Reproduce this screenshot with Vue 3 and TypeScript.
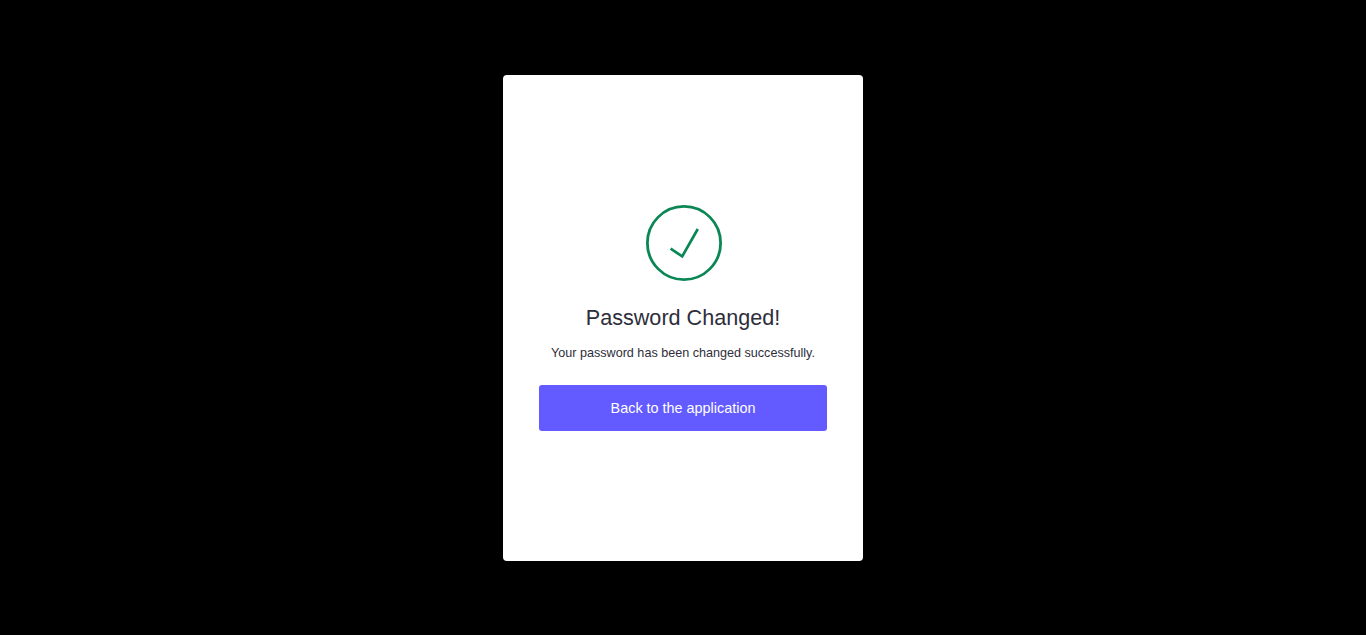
<script setup lang="ts">
const title = 'Password Changed!'
</script>

<template>
  <main class="page">
    <section class="card">
      <svg class="icon" width="76" height="76" viewBox="0 0 76 76" fill="none" stroke="#0a8754">
        <circle cx="38" cy="38" r="36.6" stroke-width="2.8" />
        <path d="M24.6 43.6 L36.2 51.4 L51.8 24" stroke-width="2.7" />
      </svg>
      <h1 class="title">{{ title }}</h1>
      <p class="text">Your password has been changed successfully.</p>
      <button class="btn" type="button">Back to the application</button>
    </section>
  </main>
</template>

<style>
html, body { margin: 0; background: #000; }
</style>

<style scoped>
.page {
  height: 635px;
  background: #000;
  display: flex;
  justify-content: center;
  align-items: flex-start;
  padding-top: 75px;
  box-sizing: border-box;
  font-family: "Liberation Sans", Arial, sans-serif;
}
.card {
  width: 360px;
  height: 486px;
  box-sizing: border-box;
  background: #fff;
  border-radius: 4px;
  padding: 0 36px;
  display: flex;
  flex-direction: column;
  align-items: center;
  justify-content: center;
}
.icon { display: block; margin-left: 2px; }
.title {
  margin: 23px 0 0;
  font-size: 21.6px;
  line-height: 28px;
  font-weight: 400;
  color: #2e2e3a;
}
.text {
  margin: 12px 0 0;
  font-size: 12.6px;
  line-height: 18px;
  color: #2e2e3a;
}
.btn {
  margin-top: 23px;
  width: 288px;
  height: 46px;
  border: 0;
  border-radius: 3px;
  background: #635bff;
  color: #fff;
  font: 400 14.4px "Liberation Sans", Arial, sans-serif;
}
</style>
